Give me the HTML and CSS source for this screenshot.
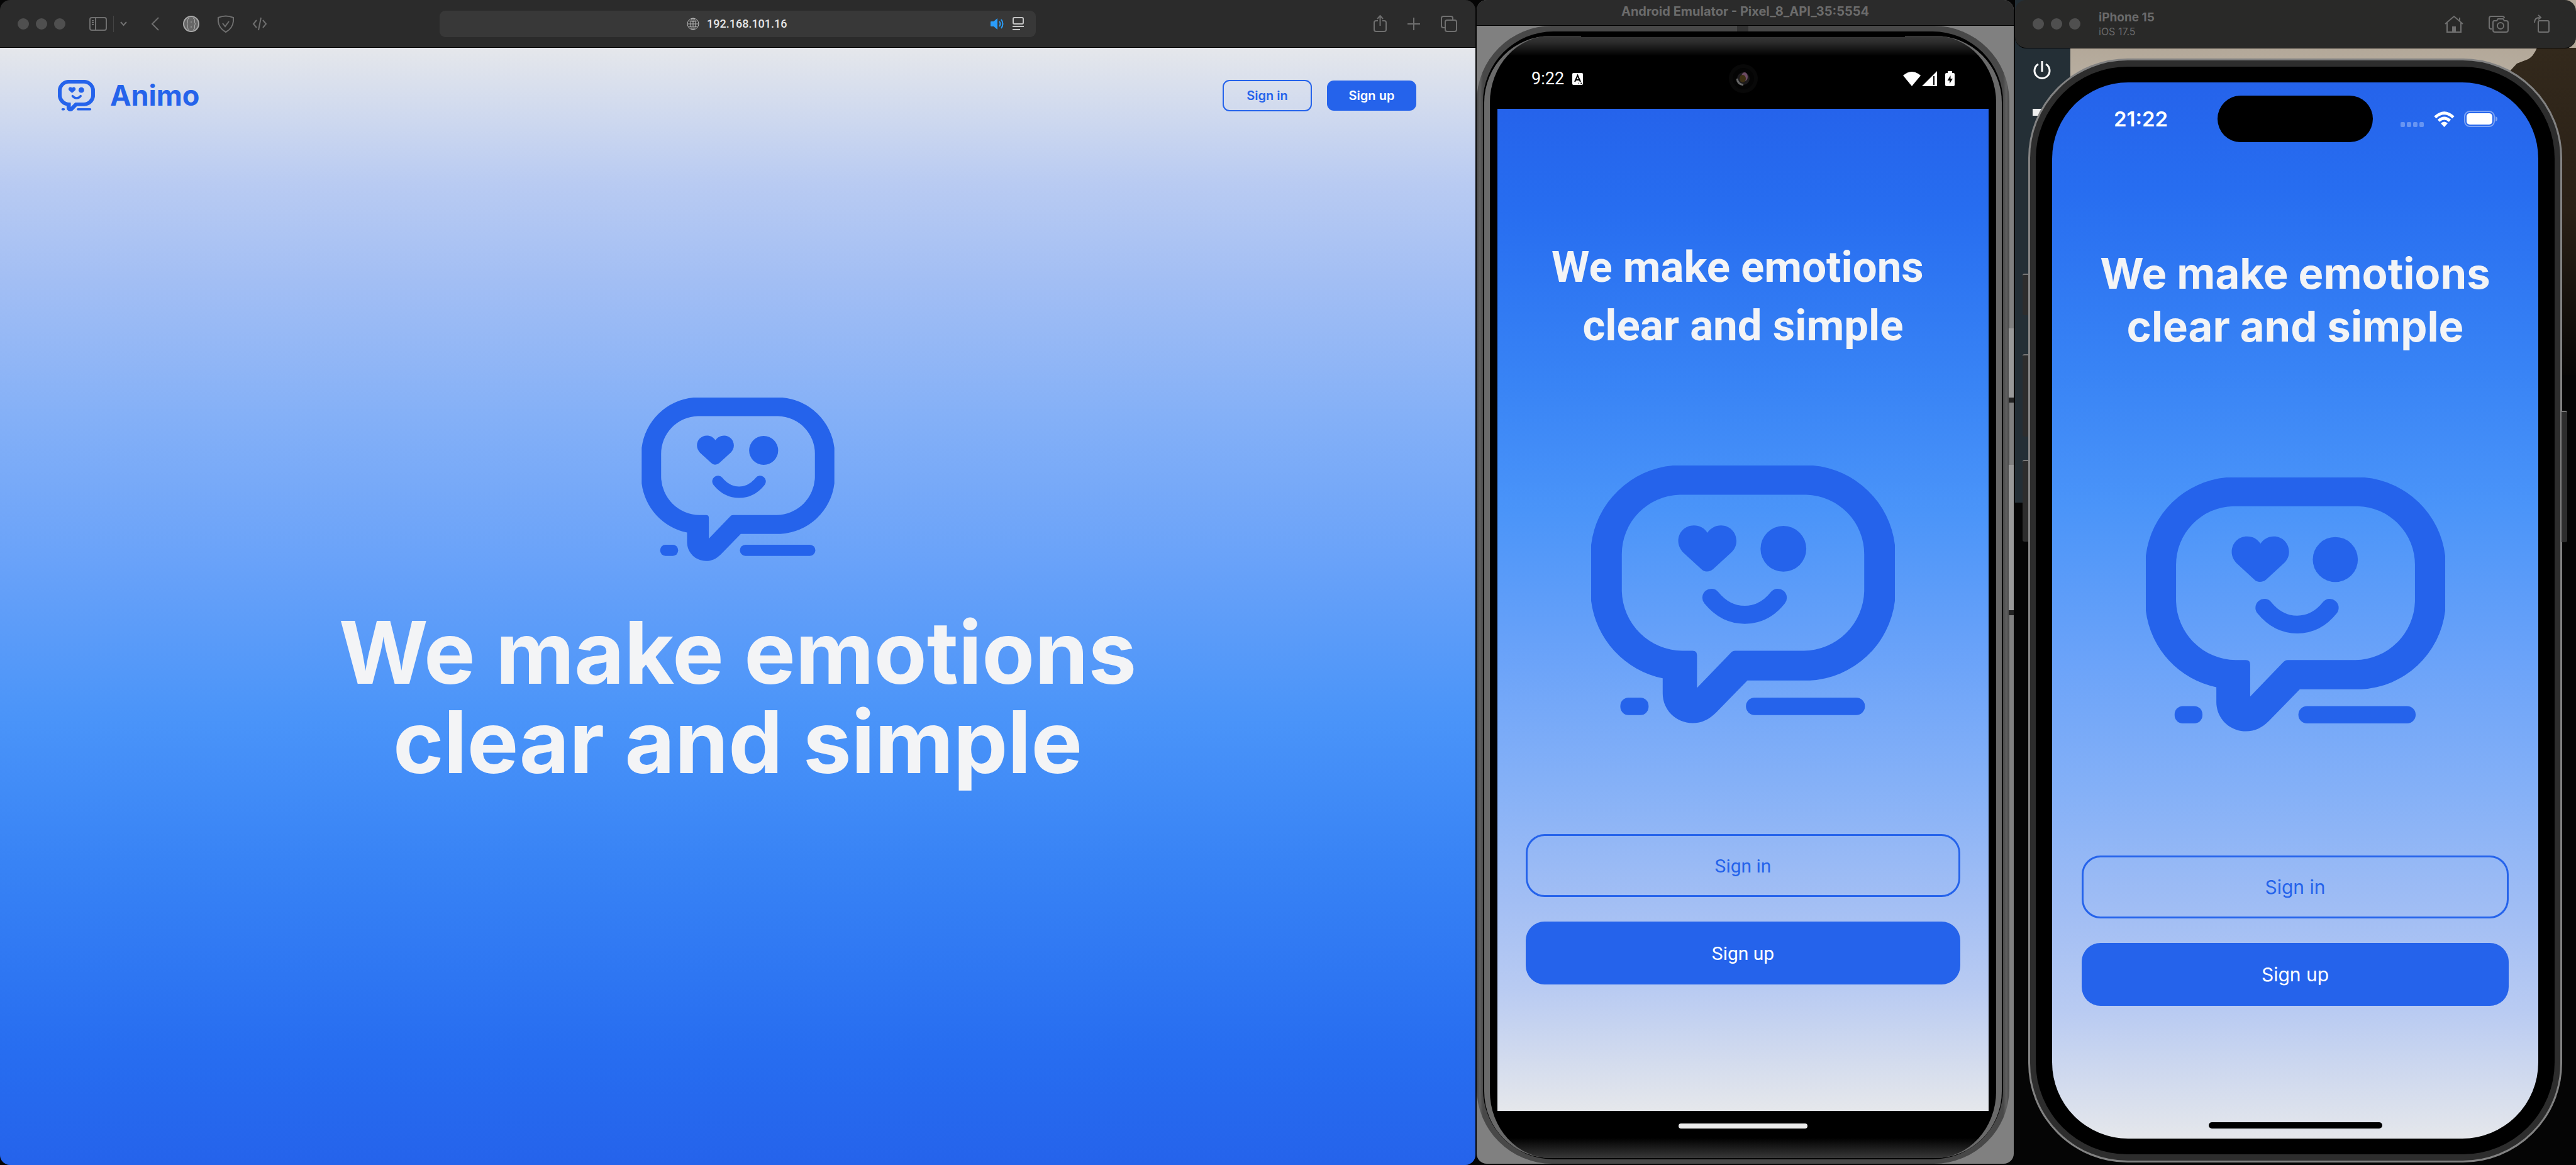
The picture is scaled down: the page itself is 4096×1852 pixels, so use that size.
FILE: index.html
```html
<!DOCTYPE html>
<html lang="en">
<head>
<meta charset="utf-8">
<title>Animo</title>
<link rel="stylesheet" href="styles.css">
</head>
<body>
<svg class="defs" aria-hidden="true">
  <symbol id="animo" viewBox="126 114 1248 1059">
    <path fill="currentColor" fill-rule="evenodd" d="M462 114H1038A372 372 0 0 1 1374 440V670A372 372 0 0 1 1025 997H768L640 1128C610 1158 580 1172 543 1172C475 1172 420 1118 420 1050V988A372 372 0 0 1 126 670V440A372 372 0 0 1 462 114ZM490 234A244 244 0 0 0 252 480V630A252 252 0 0 0 500 875H543Q561 875 561 893V1027L698 885Q706 875 718 875H1000A252 252 0 0 0 1248 630V480A244 244 0 0 0 1010 234Z"/>
    <path fill="currentColor" d="M604 390C590 370 572 360 548 360C512 360 484 388 484 424C484 442 492 458 504 471L578 539Q588 549 601 549Q616 549 628 539L704 469C716 457 723 442 723 424C723 388 695 360 660 360C636 360 616 372 604 390Z"/>
    <circle fill="currentColor" cx="916" cy="456" r="94"/>
    <path fill="none" stroke="currentColor" stroke-width="74" stroke-linecap="round" d="M620 657Q677 727 757 727T893 657"/>
    <rect fill="currentColor" x="246" y="1067" width="116" height="72" rx="34"/>
    <rect fill="currentColor" x="762" y="1067" width="489" height="72" rx="36"/>
  </symbol>
</svg>

<div class="desktop">
  <section class="window browser">
    <header class="toolbar browser-bar">
      <div class="bar-left">
        <div class="dots"><i></i><i></i><i></i></div>
        <div class="group split">
          <button class="icon" aria-label="Sidebar"><svg width="28" height="22" viewBox="0 0 28 22"><rect x="1" y="1" width="26" height="20" rx="3"/><path d="M10 1V21M4 6H7M4 9H7M4 12H7"/></svg></button>
          <i class="divider"></i>
          <button class="icon" aria-label="Tab groups"><svg width="11" height="8" viewBox="0 0 11 8"><path stroke-width="2" d="M1 1L5.500 6L10 1"/></svg></button>
        </div>
        <button class="icon" aria-label="Back"><svg width="13" height="22" viewBox="0 0 13 22"><path stroke-width="2" d="M12 1L2 11L12 21"/></svg></button>
        <div class="group extensions">
          <button class="icon" aria-label="JSON viewer"><svg width="26" height="26" viewBox="0 0 26 26"><circle class="json-disc" cx="13" cy="13" r="12"/><path class="json-marks" d="M10 4Q7.500 4 7.500 7V10Q7.500 13 6 13Q7.500 13 7.500 16V19Q7.500 22 10 22M16 4Q18.500 4 18.500 7V10Q18.500 13 20 13Q18.500 13 18.500 16V19Q18.500 22 16 22M13 9V11M13 16V19"/></svg></button>
          <button class="icon" aria-label="Privacy report"><svg width="28" height="28" viewBox="0 0 28 28"><path d="M2 4Q14 -1 26 4V10Q25 21 14 27Q3 21 2 10ZM9 13L13 18L19 10"/></svg></button>
          <button class="icon" aria-label="Develop"><svg width="24" height="22" viewBox="0 0 24 22"><path d="M7 5L2 11L7 17M17 5L22 11L17 17M14 1L10 21"/></svg></button>
        </div>
      </div>
      <div class="address">
        <span></span>
        <label class="address-text">
          <svg class="globe" width="20" height="20" viewBox="0 0 20 20"><circle cx="10" cy="10" r="9"/><ellipse cx="10" cy="10" rx="4" ry="9"/><path d="M10 1V19M1 10H19M3 5Q10 8 17 5M3 15Q10 12 17 15"/></svg>
          <input type="text" value="192.168.101.16" aria-label="Address">
        </label>
        <div class="address-tools">
          <button class="icon" aria-label="Mute"><svg width="22" height="18" viewBox="0 0 22 18"><path class="audio" d="M0 6Q0 5 1 5H5L11 0V18L5 13H1Q0 13 0 12Z"/><path class="audio-wave" d="M14 5Q17 9 14 13M17 2Q22 9 17 16"/></svg></button>
          <button class="icon light" aria-label="Page menu"><svg width="18" height="21" viewBox="0 0 18 21"><rect x="1" y="1" width="16" height="10" rx="2"/><path d="M0 15H18M0 20H12"/></svg></button>
        </div>
      </div>
      <div class="bar-right">
        <button class="icon" aria-label="Share"><svg width="21" height="27" viewBox="0 0 21 27"><path d="M7 9H4Q1 9 1 12V23Q1 26 4 26H17Q20 26 20 23V12Q20 9 17 9H14M10.500 17V2M6 6L10.500 1L15 6"/></svg></button>
        <button class="icon" aria-label="New tab"><svg width="20" height="20" viewBox="0 0 20 20"><path d="M10 0V20M0 10H20"/></svg></button>
        <button class="icon" aria-label="Tab overview"><svg width="26" height="26" viewBox="0 0 26 26"><rect x="7" y="7" width="18" height="18" rx="3"/><path d="M6 19H4Q1 19 1 16V4Q1 1 4 1H16Q19 1 19 4V6"/></svg></button>
      </div>
    </header>
    <div class="site">
      <header class="site-head">
        <a class="brand" href="#"><svg class="mark brand-mark"><use href="#animo"/></svg>Animo</a>
        <nav class="site-nav">
          <button class="btn outline small">Sign in</button>
          <button class="btn solid small">Sign up</button>
        </nav>
      </header>
      <main class="hero">
        <svg class="mark hero-mark"><use href="#animo"/></svg>
        <h1>We make emotions<br>clear and simple</h1>
      </main>
    </div>
  </section>

  <section class="window emulator">
    <header class="toolbar emulator-bar">Android Emulator - Pixel_8_API_35:5554</header>
    <div class="pixel">
      <i class="pixel-notch"></i>
      <div class="pixel-rim">
        <div class="pixel-glass">
          <i class="earpiece"></i>
          <header class="pixel-status">
            <span class="pixel-time">9:22
              <svg width="17" height="19" viewBox="0 0 17 19"><rect width="17" height="19" rx="2" fill="#fff"/><path d="M4 14L8.500 4L13 14M6 11H11" fill="none" stroke="#000" stroke-width="2"/><path d="M10 16.500H15" stroke="#000" stroke-width="2" stroke-dasharray="1 1"/></svg>
            </span>
            <svg class="camera" width="46" height="46" viewBox="0 0 46 46"><circle cx="23" cy="23" r="23" fill="#080808"/><circle cx="23" cy="23" r="17" fill="#040404"/><circle cx="23" cy="23" r="10" fill="#1c1a1c"/><ellipse cx="25" cy="20" rx="5" ry="7" fill="#6b4a62"/><ellipse cx="22" cy="23" rx="5" ry="6" fill="#3c2f12"/><path d="M13 23Q14 32 23 33" fill="none" stroke="#666" stroke-width="3"/></svg>
            <span class="pixel-icons">
              <svg width="28" height="23" viewBox="0 0 28 23"><path fill="#fff" d="M14 23L0 6Q14 -6 28 6Z"/></svg>
              <svg width="24" height="24" viewBox="0 0 24 24"><path fill="#fff" d="M0 24L24 0V24Z"/><path d="M19 8V22" stroke="#000" stroke-width="2"/></svg>
              <svg class="charge" width="15" height="24" viewBox="0 0 15 24"><path fill="#fff" d="M4 0H11V3H13Q15 3 15 5V22Q15 24 13 24H2Q0 24 0 22V5Q0 3 2 3H4Z"/><path d="M8.500 7L3.500 15H7V20L12 12H8.500Z"/></svg>
            </span>
          </header>
          <main class="app android-app">
            <h2>We make emotions&nbsp;<br>clear and simple</h2>
            <svg class="mark app-mark"><use href="#animo"/></svg>
            <div class="actions">
              <button class="btn outline">Sign in</button>
              <button class="btn solid">Sign up</button>
            </div>
          </main>
          <footer class="pixel-foot"><i class="home-bar"></i></footer>
        </div>
      </div>
      <i class="key key-power"></i>
      <i class="key key-volume"></i>
    </div>
  </section>

  <section class="simulator">
    <div class="backdrop">
      <svg class="hill" width="160" height="520" viewBox="0 0 160 520"><defs><linearGradient id="earth" x1="0" y1="0" x2="0" y2="1"><stop offset="0" stop-color="#33291c"/><stop offset=".5" stop-color="#2a2016"/><stop offset="1" stop-color="#070605"/></linearGradient></defs><path fill="url(#earth)" d="M160 0H98Q92 14 84 18L66 25L54 38L36 62L0 120V520H160Z"/></svg>
      <div class="side-panel">
        <svg width="30" height="30" viewBox="0 0 30 30"><path d="M9 5A12 12 0 1 0 21 5M15 0V17" fill="none" stroke="#fff" stroke-width="3"/></svg>
        <i></i>
      </div>
    </div>
    <header class="toolbar simulator-bar">
      <div class="dots"><i></i><i></i><i></i></div>
      <div class="device"><strong>iPhone 15</strong><span>iOS 17.5</span></div>
      <div class="device-tools">
        <button class="icon" aria-label="Home"><svg width="30" height="27" viewBox="0 0 30 27"><path d="M1 13L15 1L29 13M4 11V26H26V11M24 8V3"/><path class="fill" d="M12 26V17H18V26Z"/></svg></button>
        <button class="icon" aria-label="Screenshot"><svg width="32" height="27" viewBox="0 0 32 27"><path d="M5 21H4Q1 21 1 18V4Q1 1 4 1H22Q25 1 25 4M9 8H13L15 5H23L25 8H28Q31 8 31 11V23Q31 26 28 26H10Q7 26 7 23V11Q7 8 9 8Z"/><circle cx="19" cy="16" r="5"/></svg></button>
        <button class="icon" aria-label="Rotate"><svg width="25" height="28" viewBox="0 0 25 28"><rect x="7" y="9" width="17" height="18" rx="2"/><path d="M1 12Q1 4 9 4M7 0L11 4L7 7"/></svg></button>
      </div>
    </header>
    <div class="iphone">
      <i class="side-key action"></i><i class="side-key up"></i><i class="side-key down"></i><i class="side-key power"></i>
      <div class="bezel">
        <div class="app ios-app">
          <header class="ios-status">
            <span class="ios-time">21:22</span>
            <i class="island"></i>
            <span class="ios-icons">
              <svg class="cell" width="38" height="8" viewBox="0 0 38 8"><g fill="#fff" opacity=".3"><rect width="7" height="8" rx="2"/><rect x="10" width="7" height="8" rx="2"/><rect x="20" width="7" height="8" rx="2"/><rect x="30" width="7" height="8" rx="2"/></g></svg>
              <svg width="33" height="25" viewBox="0 0 33 25"><path fill="none" stroke="#fff" stroke-width="5" d="M2 9.500Q16.500 -4 31 9.500M7.500 15Q16.500 7 25.500 15"/><path fill="#fff" d="M16.500 25L11 19Q16.500 14 22 19Z"/></svg>
              <svg width="54" height="26" viewBox="0 0 54 26"><rect x="1" y="1" width="47" height="24" rx="8" fill="none" stroke="#fff" stroke-opacity=".4" stroke-width="2"/><rect x="4" y="4" width="41" height="18" rx="5" fill="#fff"/><path fill="#fff" fill-opacity=".4" d="M50 9Q53 10 53 13Q53 16 50 17Z"/></svg>
            </span>
          </header>
          <main class="ios-main">
            <h2>We make emotions<br>clear and simple</h2>
            <svg class="mark app-mark"><use href="#animo"/></svg>
            <div class="actions">
              <button class="btn outline">Sign in</button>
              <button class="btn solid">Sign up</button>
            </div>
          </main>
          <footer class="ios-foot"><i class="home-bar"></i></footer>
        </div>
      </div>
    </div>
  </section>
</div>
</body>
</html>
```
FILE: styles.css
```css
:root {
  --blue: #2563eb;
  --bar: #2b2b2b;
  --muted: #6b6b6b;
  --stops: #2563eb 0, #276df0 10%, #3883f5 27%, #4a94f9 40%, #69a2f9 54%, #84b0f7 67%, #a2bef4 79%, #b9cbf2 88%, #e5e7eb 100%;
}

* { box-sizing: border-box; }

body {
  margin: 0;
  background: #050505;
  font-family: Inter, "Liberation Sans", sans-serif;
}

h1, h2 { margin: 0; color: #f3f4f6; text-align: center; white-space: nowrap; }
svg, i { display: block; flex: none; }
button { margin: 0; padding: 0; border: 0; background: none; font: inherit; }

.defs { position: absolute; width: 0; height: 0; }
.mark { color: var(--blue); }

.desktop {
  display: grid;
  grid-template-columns: minmax(0, 2346fr) minmax(0, 854fr) minmax(0, 892fr);
  column-gap: 2px;
  min-height: 100vh;
}

.window {
  display: flex;
  flex-direction: column;
  border-radius: 16px;
  overflow: hidden;
}

/* Title bars */
.toolbar {
  display: flex;
  align-items: center;
  flex: none;
  background: var(--bar);
  border-bottom: 1px solid #000;
  color: var(--muted);
}

.dots { display: flex; gap: 11px; }
.dots i { width: 18px; height: 18px; border-radius: 50%; background: #4f4f4f; }

.icon { display: block; }
.icon svg { fill: none; stroke: #6f6f6f; stroke-width: 2; overflow: visible; }
.icon .fill { fill: #6f6f6f; stroke: none; }
.icon.light svg { stroke: #c4c4c4; }
.icon .json-disc { fill: #666; stroke: #a8a8a8; }
.icon .json-marks { stroke: #a8a8a8; stroke-width: 1; }
.icon .audio { fill: #2a9dfb; stroke: none; }
.icon .audio-wave { stroke: #2a9dfb; }

/* Browser */
.browser-bar {
  display: grid;
  grid-template-columns: 1fr 40.4% 1fr;
  height: 76px;
}
.bar-left, .bar-right, .group { display: flex; align-items: center; }
.bar-left { gap: 38px; padding-left: 28px; }
.bar-right { gap: 33px; padding-right: 29px; justify-content: flex-end; }
.split { gap: 10px; }
.extensions { gap: 28px; }
.divider { width: 1px; height: 26px; background: #444; }

.address {
  display: grid;
  grid-template-columns: 1fr auto 1fr;
  align-items: center;
  height: 42px;
  padding: 0 19px;
  border-radius: 9px;
  background: #383838;
}
.address-text { display: flex; align-items: center; gap: 12px; }
.globe { fill: none; stroke: #b4b4b4; stroke-width: 1; }
.address-text input {
  width: 130px;
  height: 24px;
  margin: 0;
  padding: 0;
  border: 0;
  background: none;
  color: #e6e6e6;
  font: 500 18px/24px Roboto, sans-serif;
}
.address-tools { display: flex; align-items: center; justify-content: flex-end; gap: 13px; }

.site {
  display: flex;
  flex-direction: column;
  flex: 1;
  background: linear-gradient(to top, var(--stops));
}
.site-head {
  display: flex;
  align-items: center;
  justify-content: space-between;
  padding: 51px 94px 0 92px;
}
.brand {
  display: flex;
  align-items: center;
  gap: 24px;
  color: var(--blue);
  font-size: 45px;
  font-weight: 700;
  line-height: 50px;
  text-decoration: none;
}
.brand-mark { width: 59px; height: 50px; }
.site-nav { display: flex; align-items: center; gap: 24px; }

.hero {
  display: flex;
  flex: 1;
  flex-direction: column;
  align-items: center;
  justify-content: center;
  gap: 74px;
  padding-bottom: 147px;
}
.hero-mark { width: 307px; height: 260px; }
.hero h1 { font-size: 137px; line-height: 142px; }

/* Buttons */
.btn {
  display: block;
  height: 100px;
  border-radius: 30px;
  font-size: 30px;
}
.outline { border: 3px solid var(--blue); color: var(--blue); }
.solid { background: var(--blue); color: #fff; }
.small {
  width: 142px;
  height: 48px;
  border-radius: 11px;
  font-size: 20px;
  font-weight: 600;
}
.outline.small { height: 50px; border-width: 2px; }

/* Phone apps */
.app { background: linear-gradient(var(--stops)); }
.actions { display: flex; flex-direction: column; align-self: stretch; gap: 39px; }
.home-bar { border-radius: 5px; }

/* Android emulator */
.emulator { background: #808080; margin-bottom: 2px; }
.emulator-bar { justify-content: center; height: 41px; padding-bottom: 4px; font-size: 20px; font-weight: 700; }

.pixel {
  position: relative;
  display: flex;
  flex: 1;
  margin-right: 7px;
  padding: 9px 10px 7px;
  border-radius: 120px;
  background: linear-gradient(90deg, #4a4a4a, #606060 5px, #484848 10px, #484848 calc(100% - 10px), #606060 calc(100% - 5px), #4a4a4a);
}
.pixel-notch { position: absolute; top: 0; left: calc(50% - 10px); width: 18px; height: 9px; background: #333; }
.pixel-rim {
  display: flex;
  flex: 1;
  padding: 7px 2px 2px;
  border-radius: 112px;
  background: #000;
}
.pixel-glass {
  position: relative;
  display: flex;
  flex: 1;
  flex-direction: column;
  padding: 0 12px;
  border: solid #6a6a6a;
  border-width: 0 9px;
  border-radius: 106px;
  background: linear-gradient(#383838, #2c2c2c 10px, #000 32px, #000 calc(100% - 32px), #383838);
}
.earpiece { position: absolute; top: 0; left: 18%; right: 18%; height: 2px; background: #000; }
.pixel-status {
  display: grid;
  grid-template-columns: 1fr auto 1fr;
  align-items: center;
  height: 116px;
  padding: 20px 54px 0;
  color: #fff;
}
.pixel-time { display: flex; align-items: center; gap: 13px; font: 400 27px/32px Roboto, sans-serif; }
.pixel-icons { display: flex; align-items: center; justify-content: flex-end; gap: 2px; }
.charge { margin-left: 11px; }

.android-app {
  display: flex;
  flex: 1;
  flex-direction: column;
  align-items: center;
  justify-content: space-between;
  padding: 205px 45px 201px;
  font-family: Roboto, sans-serif;
}
.android-app h2 { font-size: 69px; line-height: 93px; }
.android-app .app-mark { width: 483px; height: 410px; }
.pixel-foot { height: 75px; padding-top: 20px; }
.pixel-foot .home-bar { width: 205px; height: 8px; margin: 0 auto; background: #ebebeb; }

.key { position: absolute; right: -7px; width: 8px; background: #999; border-bottom: 8px solid #222; }
.key-power { top: 26.600%; height: 118px; }
.key-volume { top: 38.600%; height: 239px; }

/* iPhone simulator */
.simulator { position: relative; display: flex; flex-direction: column; padding-bottom: 4px; }
.backdrop {
  position: absolute;
  inset: 0;
  background: linear-gradient(#b3a899 76px, #c0b8ac 200px, #050505 400px);
}
.hill { position: absolute; top: 76px; right: 0; }
.side-panel {
  position: absolute;
  top: 0;
  left: 0;
  display: flex;
  flex-direction: column;
  gap: 46px;
  width: 88px;
  height: 799px;
  padding: 97px 0 0 28px;
  background: #242f36;
}
.side-panel i { width: 15px; height: 11px; background: #eee; }

.simulator-bar {
  position: relative;
  height: 77px;
  padding: 0 42px 0 28px;
  border-radius: 18px;
  background: #292928;
}
.device { display: flex; flex-direction: column; margin-left: 29px; }
.device strong { font-size: 19px; line-height: 24px; }
.device span { font-size: 16px; line-height: 20px; }
.device-tools { display: flex; align-items: center; gap: 40px; margin-left: auto; }

.iphone {
  position: relative;
  display: flex;
  flex: 1;
  margin: 16px 22px 0 21px;
  padding: 10px 9px;
  border: 3px solid #828282;
  border-radius: 158px;
  background: #2d2d2d;
}
.bezel {
  display: flex;
  flex: 1;
  padding: 25px 26px;
  border-radius: 146px;
  background: #000;
}
.ios-app {
  display: flex;
  flex: 1;
  flex-direction: column;
  border-radius: 121px;
}
.ios-status {
  display: grid;
  grid-template-columns: 1fr auto 1fr;
  align-items: center;
  height: 116px;
  padding: 0 64px;
  color: #fff;
}
.ios-time { padding-left: 34px; font-size: 33px; font-weight: 600; }
.island { width: 247px; height: 74px; border-radius: 37px; background: #000; }
.ios-icons { display: flex; align-items: center; justify-content: flex-end; gap: 15px; }
.cell { align-self: flex-end; }
.ios-main {
  display: flex;
  flex: 1;
  flex-direction: column;
  align-items: center;
  justify-content: space-between;
  padding: 146px 47px 185px;
}
.ios-main h2 { font-size: 67px; line-height: 84px; }
.ios-main .app-mark { width: 476px; height: 404px; }
.ios-foot { height: 26px; }
.ios-foot .home-bar { width: 276px; height: 10px; margin: 0 auto; background: #000; }

.side-key { position: absolute; left: -12px; width: 9px; background: #2d2d2d; border-top: 2px solid #777; border-radius: 3px 0 0 3px; }
.action { top: 339px; height: 66px; }
.up { top: 467px; height: 131px; }
.down { top: 635px; height: 130px; }
.power { top: 557px; right: -11px; left: auto; height: 209px; border-radius: 0 3px 3px 0; }
```
